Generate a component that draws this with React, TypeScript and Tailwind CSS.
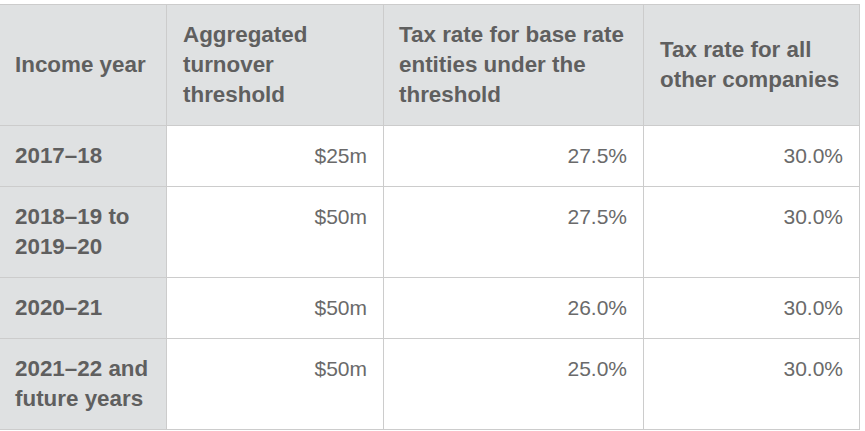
const rows = [
  { year: ['2017–18'], turnover: '$25m', base: '27.5%', other: '30.0%' },
  { year: ['2018–19 to', '2019–20'], turnover: '$50m', base: '27.5%', other: '30.0%' },
  { year: ['2020–21'], turnover: '$50m', base: '26.0%', other: '30.0%' },
  { year: ['2021–22 and', 'future years'], turnover: '$50m', base: '25.0%', other: '30.0%' },
];

export default function App() {
  return (
    <div className="h-[431px] w-[865px] overflow-hidden bg-white pt-[4px] font-['Liberation_Sans',Arial,sans-serif] text-[21px] leading-[30px] text-[#6a6a6a]">
      <table className="-ml-px w-[860px] table-fixed border-collapse">
        <colgroup>
          <col className="w-[167px]" />
          <col className="w-[217px]" />
          <col className="w-[260px]" />
          <col className="w-[216px]" />
        </colgroup>
        <thead>
          <tr className="bg-[#dfe1e2] text-left text-[22.4px] font-bold text-[#5f5f5f]">
            <th className="border border-[#cccccc] px-[15px] py-[15px] align-middle">Income year</th>
            <th className="border border-[#cccccc] px-[16px] py-[15px] align-middle">
              Aggregated turnover threshold
            </th>
            <th className="border border-[#cccccc] px-[15px] py-[15px] align-middle">
              Tax rate for base rate entities under the threshold
            </th>
            <th className="border border-[#cccccc] px-[16px] py-[15px] align-middle">
              Tax rate for all other companies
            </th>
          </tr>
        </thead>
        <tbody>
          {rows.map((r) => (
            <tr key={r.year.join(' ')}>
              <td className="border border-[#cccccc] bg-[#dfe1e2] px-[15px] py-[15px] align-top text-[22.4px] font-bold text-[#5f5f5f]">
                {r.year.map((l) => (
                  <div key={l}>{l}</div>
                ))}
              </td>
              <td className="border border-[#cccccc] px-[16px] py-[15px] text-right align-top">{r.turnover}</td>
              <td className="border border-[#cccccc] px-[16px] py-[15px] text-right align-top">{r.base}</td>
              <td className="border border-[#cccccc] px-[16px] py-[15px] text-right align-top">{r.other}</td>
            </tr>
          ))}
        </tbody>
      </table>
    </div>
  );
}
